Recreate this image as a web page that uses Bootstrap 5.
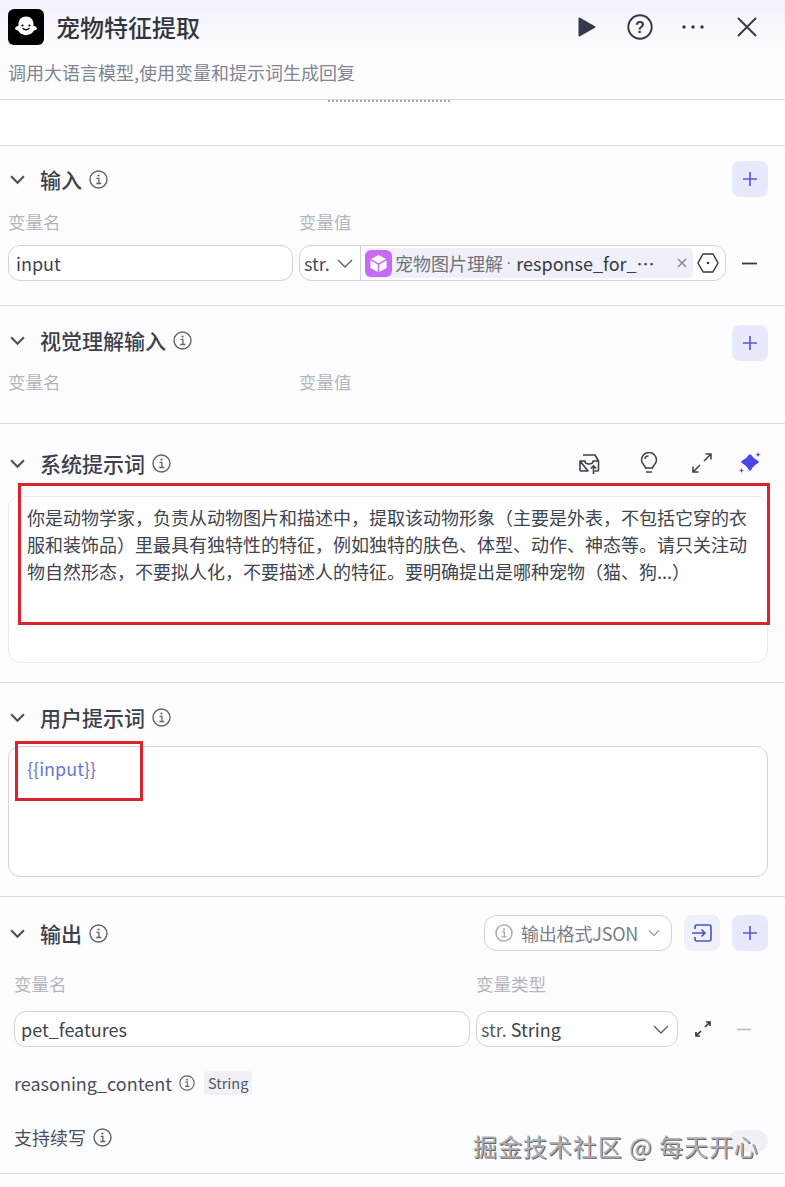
<!DOCTYPE html>
<html lang="zh">
<head>
<meta charset="utf-8">
<title>宠物特征提取</title>
<link href="https://cdn.jsdelivr.net/npm/bootstrap@5.3.0/dist/css/bootstrap.min.css" rel="stylesheet">
<style>
html,body{margin:0;height:1187px;overflow:hidden}
body{font-family:"Noto Sans CJK SC","Noto Sans",sans-serif;background:#fdfdff;color:#404350;font-size:18px;line-height:27px}
.pane{width:785px;height:1187px;position:relative;overflow:hidden}
.head{height:100px;padding:9px 0 0 8px;background:linear-gradient(#f1f2fb,#fdfdff 48px);border-bottom:1px solid #d9d9de}
.head-row{height:36px}
.logo{width:36px;height:36px;border-radius:6px;background:#000;margin-right:12px}
.head-title{font-size:24px;font-weight:500;color:#33343f;line-height:36px}
.head-sub{color:#82848f;margin-top:14px;line-height:27px}
.act{width:24px;height:24px;display:block;flex:none}
.act-play{margin-right:29px}
.act-help{width:26px;height:26px;margin-right:28px}
.act-more{margin-right:30px}
.act-close{margin-right:26px}
.strip{height:46px;border-bottom:1px solid #d9d9de;background:#fefeff}
.sliver{position:absolute;left:328px;top:100px;width:122px;height:2px;border-top:2px dotted #a9a9ae}
.sec{border-bottom:1px solid #d9d9de;padding:0 17px 0 8px}
.s1{height:160px;padding-top:15px}
.s2{height:118px;padding-top:16px}
.s3{height:259px;padding-top:21px}
.s4{height:214px;padding-top:16px}
.s5{height:277px;padding-top:18px}
.hdr{height:36px;display:flex;align-items:center}
.chev{width:17px;height:17px;margin:0 14px 0 1px;flex:none}
.ttl{font-size:21px;font-weight:500;color:#3d404b;line-height:30px}
.inf{flex:none;margin-left:7px}
.sbtn{width:36px;height:36px;border-radius:8px;background:#e8e9fb;display:flex;align-items:center;justify-content:center;flex:none}
.sbtn.gray{background:#eff0f8;margin-right:12px}
.sbtn.low{margin-top:6px}
.lbl{color:#b4b6bd;font-size:17.5px;line-height:26px}
.l1{width:291px}
.lb1{margin-top:12px}
.lb2{margin-top:11px}
.irow{margin-top:10px}
.field{height:36px;border:1px solid #d3d4da;border-radius:12px;background:#fff;display:flex;align-items:center;line-height:36px}
.fname{width:285px;padding-left:7px;margin-right:6px}
.fval{width:427px;overflow:hidden}
.tsel{width:61px;height:100%;border-right:1px solid #d3d4da;display:flex;align-items:center;padding-left:4px;flex:none;color:#4b4e5a;gap:7px}
.tag{margin-left:4px;height:30px;width:328px;background:#f0f1f8;border-radius:4px;display:flex;align-items:center;flex:none;white-space:nowrap;line-height:30px}
.cube{width:27px;height:27px;border-radius:6px;background:#c869f8;display:flex;align-items:center;justify-content:center;margin-right:3px;flex:none}
.src{color:#6f717d}
.dot{font-family:"Liberation Sans",sans-serif;color:#6f717d;margin:0 5px 0 3px;font-size:16px}
.resp{color:#363945}
.tag-x{margin-left:auto;margin-right:6px;flex:none}
.hex{margin-left:4px;flex:none}
.dash{margin-left:16px;flex:none}
.tool-tray{margin-right:40px}
.tool-bulb{margin-right:34px}
.tool-exp{margin-right:27px}
.tool-star{margin-right:7px}
.prompt{background:#fff;border:1px solid #eaebf0;border-radius:12px;padding:7px 18px;width:760px}
.p1{height:167px;margin-top:15px}
.p2{height:131px;margin-top:11px;border-color:#d3d4da;padding-top:8px;color:#6a78cf}
.mark1,.mark2{position:absolute;border:3px solid #d9232e;pointer-events:none}
.mark1{left:18px;top:483px;width:752px;height:142px}
.mark2{left:15px;top:741px;width:128px;height:60px}
.fmt{height:36px;width:188px;border:1px solid #d3d4da;border-radius:12px;color:#7c7e8a;display:flex;align-items:center;padding-left:10px;margin-right:12px;background:#fff;white-space:nowrap;line-height:34px;letter-spacing:-.2px}
.fmt-i{margin-right:8px;flex:none}
.fmt-c{margin-left:10px;flex:none}
.olbl{padding-left:6px;margin-top:20px}
.olbl span:first-child{display:block;width:462px}
.frow{padding-left:6px;margin-top:14px}
.oname{width:456px;padding-left:6px;margin-right:6px}
.otype{width:202px;padding-left:4px;justify-content:space-between;padding-right:8px}
.stxt{color:#5a5d69}
.oexp{margin-left:17px;flex:none}
.odash{margin-left:26px;flex:none}
.subrow{padding-left:6px;height:30px;display:flex;align-items:center;color:#4b4e5a}
.r1{margin-top:21px}
.r2{margin-top:24px}
.ri1{margin-left:7px;flex:none}
.ri2{margin-left:7px;flex:none}
.chip{font-size:14.5px;background:#f0f1f8;border-radius:4px;padding:0 4px;line-height:24px;margin-left:9px;color:#51545f}
.toggle-hint{position:absolute;left:728px;top:1130px;width:40px;height:22px;border-radius:11px;background:#f0f1f6}
.wmark{position:absolute;left:473px;top:1128px;font-size:24px;line-height:36px;color:#b0b0b4;letter-spacing:.95px;white-space:nowrap;text-shadow:1px 1px 0 #66666b,-1px -1px 0 #fff}
.defs{position:absolute}
</style>
</head>
<body>
<div class="pane">
  <div class="head">
    <div class="head-row d-flex align-items-center">
      <div class="logo d-flex align-items-center justify-content-center">
        <svg width="30" height="30" viewBox="0 0 30 30"><path fill="#fff" d="M15 4.500c-4.600 0-7.500 3.400-7.500 7.600v1.600c-1.800.5-3.400 1.400-3.400 2.800 0 1.500 1.700 1.900 3 1.900 1.100 2.200 3 3.500 5 4.200 1.800.7 4.100.7 5.800 0 2-.7 3.900-2 5-4.200 1.300 0 3-.4 3-1.900 0-1.400-1.600-2.300-3.400-2.800v-1.600c0-4.200-2.900-7.600-7.500-7.600z"/><circle cx="11.500" cy="13.500" r="1.100" fill="#000"/><circle cx="18.500" cy="13.500" r="1.100" fill="#000"/><path d="M12 16.500c1.500 1.700 4.500 1.700 6 0" stroke="#000" stroke-width="1.200" fill="none" stroke-linecap="round"/></svg>
      </div>
      <div class="head-title flex-grow-1">宠物特征提取</div>
      <div class="d-flex align-items-center">
        <svg class="act act-play" viewBox="0 0 24 24"><path fill="#33394a" d="M4.500 3.500a1 1 0 0 1 1.500-.8l15 8.500a1 1 0 0 1 0 1.600l-15 8.500a1 1 0 0 1-1.500-.8z"/></svg>
        <svg class="act act-help" viewBox="0 0 26 26"><circle cx="13" cy="13" r="11.700" fill="none" stroke="#33394a" stroke-width="1.900"/><text x="13" y="18.500" text-anchor="middle" font-size="16" font-weight="700" fill="#33394a" font-family="Liberation Sans">?</text></svg>
        <svg class="act act-more" viewBox="0 0 24 24"><circle cx="3" cy="12" r="1.700" fill="#33394a"/><circle cx="12" cy="12" r="1.700" fill="#33394a"/><circle cx="21" cy="12" r="1.700" fill="#33394a"/></svg>
        <svg class="act act-close" viewBox="0 0 24 24"><path d="M3.500 3.500l17 17M20.500 3.500l-17 17" stroke="#33394a" stroke-width="1.900" stroke-linecap="round"/></svg>
      </div>
    </div>
    <div class="head-sub">调用大语言模型,使用变量和提示词生成回复</div>
  </div>
  <div class="strip"></div>
  <div class="sliver"></div>

  <section class="sec s1">
    <div class="hdr">
      <svg class="chev" viewBox="0 0 16 16"><path d="M2 5l6 6 6-6" fill="none" stroke="#4b4f5c" stroke-width="2"/></svg>
      <span class="ttl">输入</span>
      <svg class="inf" width="19" height="19" viewBox="0 0 19 19"><use href="#i-info"/></svg>
      <span class="flex-grow-1"></span>
      <span class="sbtn"><svg width="16" height="16" viewBox="0 0 16 16"><path d="M8 1v14M1 8h14" stroke="#5a58e0" stroke-width="1.700"/></svg></span>
    </div>
    <div class="d-flex lbl lb1"><span class="l1">变量名</span><span>变量值</span></div>
    <div class="d-flex align-items-center irow">
      <div class="field fname">input</div>
      <div class="field fval">
        <div class="tsel">str.<svg width="16" height="16" viewBox="0 0 16 16"><path d="M1 5l7 7 7-7" fill="none" stroke="#5d606c" stroke-width="1.400"/></svg></div>
        <div class="tag">
          <span class="cube"><svg width="19" height="19" viewBox="0 0 20 20"><path fill="#fff" d="M10 1l8 4.300L10 9.800 2 5.300zM1.500 6.800L9.200 11v8L1.500 14.800zM18.500 6.800L10.800 11v8l7.700-4.200z"/></svg></span>
          <span class="src">宠物图片理解</span><span class="dot">·</span><span class="resp">response_for_⋯</span>
          <svg class="tag-x" width="10" height="10" viewBox="0 0 10 10"><path d="M1 1l8 8M9 1L1 9" stroke="#7c7e8a" stroke-width="1.200"/></svg>
        </div>
        <svg class="hex" width="22" height="22" viewBox="0 0 22 22"><path d="M6 2h10l5 9-5 9H6l-5-9z" fill="none" stroke="#33394a" stroke-width="1.500" stroke-linejoin="round"/><circle cx="11" cy="11" r="1.300" fill="#33394a"/></svg>
      </div>
      <svg class="dash" width="15" height="3" viewBox="0 0 15 3"><path d="M0 1.500h15" stroke="#33394a" stroke-width="1.800"/></svg>
    </div>
  </section>

  <section class="sec s2">
    <div class="hdr">
      <svg class="chev" viewBox="0 0 16 16"><path d="M2 5l6 6 6-6" fill="none" stroke="#4b4f5c" stroke-width="2"/></svg>
      <span class="ttl">视觉理解输入</span>
      <svg class="inf" width="19" height="19" viewBox="0 0 19 19"><use href="#i-info"/></svg>
      <span class="flex-grow-1"></span>
      <span class="sbtn low"><svg width="16" height="16" viewBox="0 0 16 16"><path d="M8 1v14M1 8h14" stroke="#5a58e0" stroke-width="1.700"/></svg></span>
    </div>
    <div class="d-flex lbl lb2"><span class="l1">变量名</span><span>变量值</span></div>
  </section>

  <section class="sec s3">
    <div class="hdr">
      <svg class="chev" viewBox="0 0 16 16"><path d="M2 5l6 6 6-6" fill="none" stroke="#4b4f5c" stroke-width="2"/></svg>
      <span class="ttl">系统提示词</span>
      <svg class="inf" width="19" height="19" viewBox="0 0 19 19"><use href="#i-info"/></svg>
      <span class="flex-grow-1"></span>
      <svg class="tool-tray" width="22" height="21" viewBox="0 0 22 21"><path d="M5 2h12l3.500 6v9a1 1 0 0 1-1 1h-3M10 18H3a1 1 0 0 1-1-1V8zM2 8h5c0 2 2 3 4 3s4-1 4-3h5.500" fill="none" stroke="#3c404c" stroke-width="1.600" stroke-linejoin="round"/><path d="M15.500 21v-8M12.800 15.500l2.700-2.700 2.700 2.700" fill="none" stroke="#3c404c" stroke-width="1.600"/></svg>
      <svg class="tool-bulb" width="18" height="22" viewBox="0 0 18 22"><path d="M5.500 16c0-2-4-3.500-4-8a7.500 7.500 0 0 1 15 0c0 4.500-4 6-4 8z" fill="none" stroke="#3c404c" stroke-width="1.500"/><path d="M6 20h6M5 7c0-2 1.800-3 3.500-3" fill="none" stroke="#3c404c" stroke-width="1.500"/></svg>
      <svg class="tool-exp" width="20" height="20" viewBox="0 0 20 20"><path d="M12 8l7-7M13.500 1H19v5.500M8 12l-7 7M1 13.500V19h5.500" fill="none" stroke="#3c404c" stroke-width="1.500"/></svg>
      <svg class="tool-star" width="22" height="22" viewBox="0 0 22 22"><path fill="#4d44ea" d="M11 3.500c1.700 2.900 3.800 4.900 7.500 6.500-3.700 1.600-5.800 3.900-7.500 7.500-1.700-3.600-3.800-5.900-7.500-7.500 3.700-1.600 5.800-3.600 7.500-6.500z" stroke="#4d44ea" stroke-width="2.500" stroke-linejoin="round"/><path fill="#4d44ea" d="M19 0c.3 1.700 1 2.400 2.700 2.700-1.700.3-2.400 1-2.700 2.700-.3-1.700-1-2.400-2.700-2.700C18 2.400 18.700 1.700 19 0zM2.500 16c.3 1.500 1 2.200 2.500 2.500-1.500.3-2.200 1-2.500 2.500-.3-1.500-1-2.200-2.500-2.500 1.500-.3 2.200-1 2.500-2.500z"/></svg>
    </div>
    <div class="prompt p1">你是动物学家，负责从动物图片和描述中，提取该动物形象（主要是外表，不包括它穿的衣服和装饰品）里最具有独特性的特征，例如独特的肤色、体型、动作、神态等。请只关注动物自然形态，不要拟人化，不要描述人的特征。要明确提出是哪种宠物（猫、狗...）</div>
  </section>

  <section class="sec s4">
    <div class="hdr">
      <svg class="chev" viewBox="0 0 16 16"><path d="M2 5l6 6 6-6" fill="none" stroke="#4b4f5c" stroke-width="2"/></svg>
      <span class="ttl">用户提示词</span>
      <svg class="inf" width="19" height="19" viewBox="0 0 19 19"><use href="#i-info"/></svg>
    </div>
    <div class="prompt p2">{{input}}</div>
  </section>

  <section class="sec s5">
    <div class="hdr">
      <svg class="chev" viewBox="0 0 16 16"><path d="M2 5l6 6 6-6" fill="none" stroke="#4b4f5c" stroke-width="2"/></svg>
      <span class="ttl">输出</span>
      <svg class="inf" width="19" height="19" viewBox="0 0 19 19"><use href="#i-info"/></svg>
      <span class="flex-grow-1"></span>
      <div class="fmt">
        <svg class="fmt-i" width="18" height="18" viewBox="0 0 19 19"><use href="#i-info2"/></svg>输出格式JSON
        <svg class="fmt-c" width="12" height="12" viewBox="0 0 12 12"><path d="M1 3.500l5 5 5-5" fill="none" stroke="#9a9ca6" stroke-width="1.200"/></svg>
      </div>
      <span class="sbtn gray"><svg width="20" height="18" viewBox="0 0 20 18"><path d="M3 5V3a2 2 0 0 1 2-2h12a2 2 0 0 1 2 2v12a2 2 0 0 1-2 2H5a2 2 0 0 1-2-2v-2" fill="none" stroke="#4d50cc" stroke-width="1.600"/><path d="M0 9h13M9.500 5.500L13 9l-3.500 3.500" fill="none" stroke="#4d50cc" stroke-width="1.600"/></svg></span>
      <span class="sbtn"><svg width="16" height="16" viewBox="0 0 16 16"><path d="M8 1v14M1 8h14" stroke="#5a58e0" stroke-width="1.700"/></svg></span>
    </div>
    <div class="d-flex lbl olbl"><span>变量名</span><span>变量类型</span></div>
    <div class="d-flex align-items-center frow">
      <div class="field oname">pet_features</div>
      <div class="field otype"><span><span class="stxt">str.</span> String</span><svg width="16" height="16" viewBox="0 0 16 16"><path d="M1 5l7 7 7-7" fill="none" stroke="#5d606c" stroke-width="1.400"/></svg></div>
      <svg class="oexp" width="16" height="16" viewBox="0 0 16 16"><path d="M10 6l5-5M11 1h4v4M6 10l-5 5M1 11v4h4" fill="none" stroke="#33394a" stroke-width="1.700"/></svg>
      <svg class="odash" width="14" height="3" viewBox="0 0 14 3"><path d="M0 1.500h14" stroke="#b9bac0" stroke-width="1.600"/></svg>
    </div>
    <div class="subrow r1">reasoning_content<svg class="ri1" width="16" height="16" viewBox="0 0 19 19"><use href="#i-info"/></svg><span class="chip">String</span></div>
    <div class="subrow r2">支持续写<svg class="ri2" width="19" height="19" viewBox="0 0 19 19"><use href="#i-info"/></svg></div>
  </section>

  <div class="mark1"></div>
  <div class="mark2"></div>
  <div class="toggle-hint"></div>
  <div class="wmark">掘金技术社区 @ 每天开心</div>

  <svg class="defs" width="0" height="0">
    <defs>
      <g id="i-info"><circle cx="9.500" cy="9.500" r="8.500" fill="none" stroke="#5f626d" stroke-width="1.400"/><circle cx="9.500" cy="5.500" r="1.100" fill="#5f626d"/><path d="M7.500 8.300h2.400v5M7.300 13.500h5" fill="none" stroke="#5f626d" stroke-width="1.300"/></g>
      <g id="i-info2"><circle cx="9.500" cy="9.500" r="8.500" fill="none" stroke="#a3a5ae" stroke-width="1.400"/><circle cx="9.500" cy="5.500" r="1.100" fill="#a3a5ae"/><path d="M7.500 8.300h2.400v5M7.300 13.500h5" fill="none" stroke="#a3a5ae" stroke-width="1.300"/></g>
    </defs>
  </svg>
</div>
<script src="https://cdn.jsdelivr.net/npm/bootstrap@5.3.0/dist/js/bootstrap.bundle.min.js"></script>
</body>
</html>
